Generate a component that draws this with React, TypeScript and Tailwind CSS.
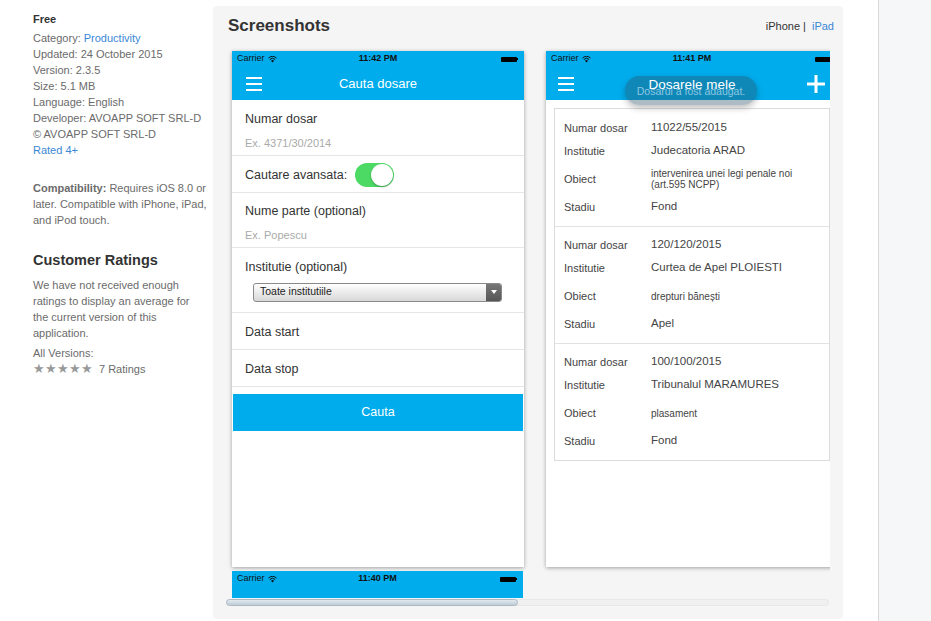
import React from "react";

const font = { fontFamily: '"Liberation Sans", Arial, sans-serif' };

const Wifi = () => (
  <svg width="9" height="7" viewBox="0 0 18 14" className="ml-[3px]">
    <path d="M9 13 L6 9.5 A4.5 4.5 0 0 1 12 9.5 Z" fill="#111" />
    <path d="M3.6 7 A7.8 7.8 0 0 1 14.4 7" stroke="#111" strokeWidth="2" fill="none" />
    <path d="M1 4 A11.5 11.5 0 0 1 17 4" stroke="#111" strokeWidth="2" fill="none" />
  </svg>
);

const StatusBar = ({ time }: { time: string }) => (
  <div className="relative flex h-[16px] items-center px-[5px] text-[9px] text-[#111]">
    <div className="flex items-center">
      Carrier
      <Wifi />
    </div>
    <div className="absolute left-0 right-0 text-center font-bold">{time}</div>
    <div className="ml-auto mr-[1px] flex items-center">
      <div className="h-[5px] w-[16px] rounded-[1px] bg-black" />
      <div className="h-[2px] w-[1px] bg-black" />
    </div>
  </div>
);

const Burger = () => (
  <div className="flex w-[16px] flex-col gap-[4px]">
    <div className="h-[2px] bg-white" />
    <div className="h-[2px] bg-white" />
    <div className="h-[2px] bg-white" />
  </div>
);

const FormRow = ({ label, hint, tall }: { label: string; hint: string; tall?: boolean }) => (
  <div
    className={
      tall
        ? "flex h-[56px] flex-col border-b border-[#e6e6e6] pl-[13px] pt-[10px]"
        : "flex h-[55px] flex-col border-b border-[#e6e6e6] pl-[13px] pt-[9px]"
    }
  >
    <div className="text-[12.5px] text-[#333]">{label}</div>
    <div className="mt-[6px] text-[11px] text-[#aaa]">{hint}</div>
  </div>
);

const PlainRow = ({ label }: { label: string }) => (
  <div className="flex h-[37px] items-center border-b border-[#e6e6e6] pl-[13px] pt-[3px] text-[12.5px] text-[#333]">
    {label}
  </div>
);

const SearchPhone = () => (
  <div className="h-[516px] w-[292px] bg-white shadow-[0_1px_4px_rgba(0,0,0,0.35)]">
    <div className="bg-[#00acec]">
      <StatusBar time="11:42 PM" />
      <div className="relative flex h-[33px] items-center pl-[14px]">
        <Burger />
        <div className="absolute left-0 right-0 text-center text-[13px] text-white">Cauta dosare</div>
      </div>
    </div>
    <FormRow label="Numar dosar" hint="Ex. 4371/30/2014" tall />
    <div className="flex h-[37px] items-center border-b border-[#e6e6e6] pl-[13px] pt-[2px] text-[12.5px] text-[#333]">
      Cautare avansata:
      <div className="ml-[8px] flex h-[24px] w-[39px] items-center justify-end rounded-full bg-[#4cd964] pr-[1px]">
        <div className="h-[22px] w-[22px] rounded-full bg-white shadow-[0_1px_2px_rgba(0,0,0,0.3)]" />
      </div>
    </div>
    <FormRow label="Nume parte (optional)" hint="Ex. Popescu" />
    <div className="h-[65px] border-b border-[#e6e6e6] pl-[13px] pt-[10px]">
      <div className="text-[12.5px] text-[#333]">{"Institutie (optional)"}</div>
      <div className="ml-[8px] mt-[6px] flex h-[19px] w-[249px] overflow-hidden rounded-[3px] border border-[#8a8a8a] bg-gradient-to-b from-white to-[#d8d8d8]">
        <div className="flex flex-1 items-center pl-[6px] text-[10.5px] text-[#222]">Toate institutiile</div>
        <div className="flex w-[15px] items-center justify-center bg-gradient-to-b from-[#777] to-[#555]">
          <div className="h-0 w-0 border-x-[3px] border-t-[4px] border-x-transparent border-t-white" />
        </div>
      </div>
    </div>
    <PlainRow label="Data start" />
    <PlainRow label="Data stop" />
    <div className="mx-[1px] mt-[7px] flex h-[37px] items-center justify-center bg-[#00acec] text-[12.5px] text-white">
      Cauta
    </div>
  </div>
);

type Dosar = { nr: string; inst: string; obiect: string; stadiu: string };

const dosare: Dosar[] = [
  { nr: "11022/55/2015", inst: "Judecatoria ARAD", obiect: "intervenirea unei legi penale noi (art.595 NCPP)", stadiu: "Fond" },
  { nr: "120/120/2015", inst: "Curtea de Apel PLOIESTI", obiect: "drepturi bănești", stadiu: "Apel" },
  { nr: "100/100/2015", inst: "Tribunalul MARAMURES", obiect: "plasament", stadiu: "Fond" },
];

const DosarItem = ({ d, first }: { d: Dosar; first: boolean }) => (
  <div className={first ? "pb-[7px] pt-[8px]" : "border-t border-[#e2e2e2] pb-[7px] pt-[7px]"}>
    <div className="flex h-[22px] items-center">
      <div className="w-[96px] pl-[9px] text-[11px] text-[#444]">Numar dosar</div>
      <div className="text-[11.5px] text-[#444]">{d.nr}</div>
    </div>
    <div className="flex h-[24px] items-center">
      <div className="w-[96px] pl-[9px] text-[11px] text-[#444]">Institutie</div>
      <div className="text-[11.5px] text-[#444]">{d.inst}</div>
    </div>
    <div className="flex h-[32px] items-center">
      <div className="w-[96px] shrink-0 pl-[9px] text-[11px] text-[#444]">Obiect</div>
      <div className="w-[160px] text-[10px] leading-[11px] text-[#444]">{d.obiect}</div>
    </div>
    <div className="flex h-[24px] items-center">
      <div className="w-[96px] pl-[9px] text-[11px] text-[#444]">Stadiu</div>
      <div className="text-[11.5px] text-[#444]">{d.stadiu}</div>
    </div>
  </div>
);

const ListPhone = () => (
  <div className="h-[516px] w-[292px] shrink-0 bg-white shadow-[0_1px_4px_rgba(0,0,0,0.35)]">
    <div className="relative bg-[#00acec]">
      <StatusBar time="11:41 PM" />
      <div className="relative flex h-[33px] items-center pl-[12px] pr-[13px]">
        <Burger />
        <div className="absolute left-[79px] top-[9px] flex h-[29px] w-[132px] items-end justify-center rounded-full bg-[rgba(40,80,100,0.38)] pb-[5px] text-[10.5px] text-[#8cc7e0] shadow-[0_3px_6px_rgba(0,0,0,0.25)]">
          Dosarul a fost adaugat.
        </div>
        <div className="absolute left-0 right-0 top-[8px] text-center text-[13.5px] text-white">Dosarele mele</div>
        <svg width="18" height="18" viewBox="0 0 18 18" className="ml-auto">
          <path d="M9 0 V18 M0 9 H18" stroke="white" strokeWidth="3" />
        </svg>
      </div>
    </div>
    <div className="mx-[8px] mt-[8px] border border-[#dcdcdc]">
      {dosare.map((d, i) => (
        <DosarItem key={d.nr} d={d} first={i === 0} />
      ))}
    </div>
  </div>
);

const LeftColumn = () => (
  <div className="ml-[33px] w-[175px] shrink-0 pt-[11px] text-[11px] leading-[16px] text-[#6b6b6b]">
    <div className="mb-[3px] font-bold text-[#333]">Free</div>
    <div>
      Category: <span className="text-[#3a87d5]">Productivity</span>
    </div>
    <div>Updated: 24 October 2015</div>
    <div>Version: 2.3.5</div>
    <div>Size: 5.1 MB</div>
    <div>Language: English</div>
    <div>Developer: AVOAPP SOFT SRL-D</div>
    <div>© AVOAPP SOFT SRL-D</div>
    <div className="text-[#3a87d5]">Rated 4+</div>
    <p className="mt-[22px]">
      <span className="font-bold">Compatibility:</span> Requires iOS 8.0 or later. Compatible with iPhone, iPad,
      and iPod touch.
    </p>
    <h2 className="mt-[23px] text-[14.5px] font-bold leading-[18px] text-[#333]">Customer Ratings</h2>
    <p className="mt-[8px] w-[160px]">We have not received enough ratings to display an average for the current version of this application.</p>
    <div className="mt-[4px]">All Versions:</div>
    <div className="flex items-center">
      <span className="text-[13px] leading-[16px] text-[#999]">★★★★★</span>
      <span className="ml-[6px]">7 Ratings</span>
    </div>
  </div>
);

const App = () => {
  return (
    <div className="flex h-[621px] w-[931px] overflow-hidden bg-white" style={font}>
      <LeftColumn />
      <div className="ml-[5px] mt-[6px] h-[613px] w-[630px] shrink-0 rounded-[4px] bg-[#f5f5f5] pl-[13px] pr-[9px] pt-[10px]">
        <div className="flex items-center">
          <h1 className="ml-[2px] text-[17px] font-bold leading-[20px] text-[#333]">Screenshots</h1>
          <div className="ml-auto text-[11px] text-[#333]">
            iPhone |<span className="ml-[6px] text-[#3a87d5]">iPad</span>
          </div>
        </div>
        <div className="mt-[9px] h-[553px] w-[604px] overflow-hidden pl-[6px] pt-[6px]">
          <div className="flex">
            <div className="flex shrink-0 flex-col">
              <SearchPhone />
              <div className="mt-[4px] h-[60px] w-[291px] bg-[#00acec]">
                <StatusBar time="11:40 PM" />
              </div>
            </div>
            <div className="ml-[22px]">
              <ListPhone />
            </div>
          </div>
        </div>
        <div className="mt-[1px] h-[7px] w-[603px] rounded-full border border-[#e8e8e8] bg-[#f0f0f0]">
          <div className="-mt-[1px] -ml-[1px] h-[7px] w-[292px] rounded-full border border-[#aeb9c4] bg-gradient-to-b from-[#e3eaf0] to-[#bfcbd6]" />
        </div>
      </div>
      <div className="ml-[35px] flex-1 border-l border-[#d8d8d8] bg-[#f6f7f9]" />
    </div>
  );
};

export default App;
